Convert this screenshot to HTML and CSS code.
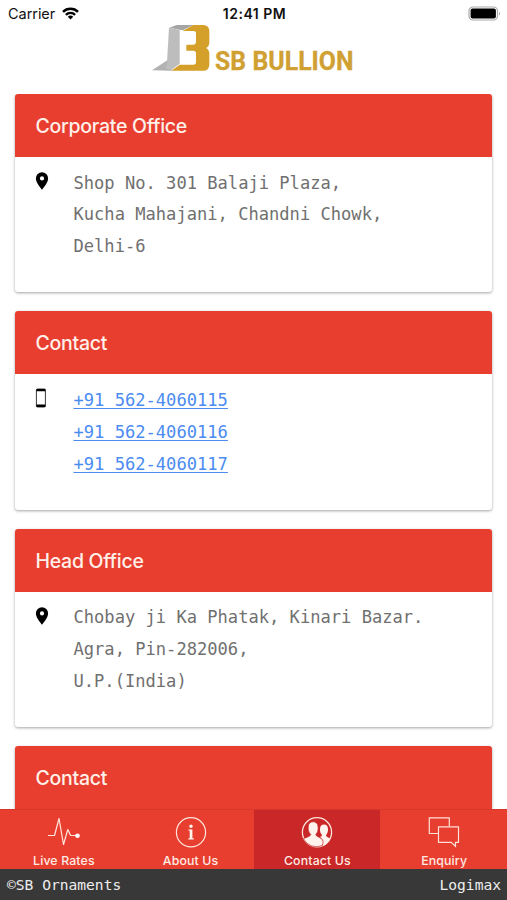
FILE: index.html
```html
<!DOCTYPE html>
<html lang="en">
<head>
<meta charset="utf-8">
<title>SB Bullion</title>
<link rel="stylesheet" href="styles.css">
</head>
<body>
<div class="app">
  <header class="top">
    <div class="status">
      <div class="carrier"><span class="carrier-name">Carrier</span>
        <svg class="wifi" viewBox="0 0 17 13"><g fill="none" stroke="#000" stroke-width="2.4"><path d="M1 4.8a10.6 10.6 0 0 1 15 0"/><path d="M3.9 7.8a6.5 6.5 0 0 1 9.2 0"/></g><path d="M5.8 9.8a3.8 3.8 0 0 1 5.4 0L8.5 12.6z"/></svg>
      </div>
      <span class="time">12:41 PM</span>
      <svg class="battery" viewBox="0 0 33 15"><rect x="1" y="1" width="28.5" height="13" rx="4" fill="#fff" stroke="#aaa" stroke-width="1.2"/><rect x="2.6" y="2.6" width="25.3" height="9.8" rx="2"/><path d="M31 5.5q1.5 2 0 4z" fill="#888"/></svg>
    </div>
    <div class="brand">
      <svg class="mark" viewBox="36 18 174 144">
        <path d="M88 29L110 21H160L128 37L118 35z" fill="#a5a5a5"/>
        <path d="M87 29L119 36V137L95 155L80 150z" fill="#bdbdbd"/>
        <path d="M36 157L82 127L80 150L98 155L94 158z" fill="#b2b2b2"/>
        <path d="M128 39L160 21H190Q208 22 208 40V75Q208 84 199 90Q208 96 208 104V140Q207 158 190 158H94L119 140H160Q168 140 168 132V106Q168 98 160 98H139V80H160Q168 79 168 71V46Q168 39 160 39z" fill="#d5a02a"/>
      </svg>
      <svg class="wordmark" viewBox="0 0 140 26"><text x="1" y="21.5" textLength="31" lengthAdjust="spacingAndGlyphs">SB</text><text x="38.500" y="21.5" textLength="101" lengthAdjust="spacingAndGlyphs">BULLION</text></svg>
    </div>
  </header>

  <main class="cards">
    <section class="card">
      <h2>Corporate Office</h2>
      <div class="body">
        <svg class="pin" viewBox="0 0 14 18"><path fill-rule="evenodd" d="M7 .3A6.1 6.1 0 0 0 .9 6.4C.9 11 7 17.6 7 17.6S13.1 11 13.1 6.4A6.1 6.1 0 0 0 7 .3zm0 4a2.1 2.1 0 1 1 0 4.2 2.1 2.1 0 0 1 0-4.2z"/></svg>
        <address>Shop No. 301 Balaji Plaza,<br>Kucha Mahajani, Chandni Chowk,<br>Delhi-6</address>
      </div>
    </section>
    <section class="card">
      <h2>Contact</h2>
      <div class="body">
        <svg class="phone" viewBox="0 0 12 20"><rect x="1.4" y="1" width="9" height="18" rx="1.2" fill="#fff" stroke="#222" stroke-width=".9"/><path d="M1.4 1h9v2.2h-9zM1.4 16.5h9V19h-9z"/></svg>
        <address><a href="tel:+915624060115">+91 562-4060115</a><br><a href="tel:+915624060116">+91 562-4060116</a><br><a href="tel:+915624060117">+91 562-4060117</a></address>
      </div>
    </section>
    <section class="card">
      <h2>Head Office</h2>
      <div class="body">
        <svg class="pin" viewBox="0 0 14 18"><path fill-rule="evenodd" d="M7 .3A6.1 6.1 0 0 0 .9 6.4C.9 11 7 17.6 7 17.6S13.1 11 13.1 6.4A6.1 6.1 0 0 0 7 .3zm0 4a2.1 2.1 0 1 1 0 4.2 2.1 2.1 0 0 1 0-4.2z"/></svg>
        <address>Chobay ji Ka Phatak, Kinari Bazar.<br>Agra, Pin-282006,<br>U.P.(India)</address>
      </div>
    </section>
    <section class="card">
      <h2>Contact</h2>
    </section>
  </main>

  <nav class="tabs">
    <a class="tab">
      <svg class="icon" viewBox="0 0 34 32"><path d="M1 18.5h6.5L12 1.5l4.5 26 4.3-15 2.8 6H29" fill="none" stroke="#ffe6dc" stroke-width="1.2" stroke-linejoin="round"/><circle cx="30.5" cy="18.7" r="2.3" fill="#fff"/></svg>
      <span>Live Rates</span>
    </a>
    <a class="tab">
      <svg class="icon" viewBox="0 0 34 32"><circle cx="17" cy="15.3" r="14.6" fill="none" stroke="#ffe6dc" stroke-width="1.2"/><circle cx="17" cy="9.2" r="1.7" fill="#fff3ed"/><path d="M14.4 12.5h4V21l1.4.4v1.1h-5.5v-1.1l1.4-.4v-7.2l-1.3-.3z" fill="#fff3ed"/></svg>
      <span>About Us</span>
    </a>
    <a class="tab active">
      <svg class="icon" viewBox="0 0 34 32"><circle cx="17" cy="15.3" r="14.6" fill="none" stroke="#ffe6dc" stroke-width="1.3"/><path d="M20 20q2-.6 2-2c-1.700-1.800-2.200-3.800-2-6 .1-3 1.700-4.400 4-4.400s3.900 1.400 4 4.400c.1 2.400-.5 4.500-1.900 6 0 1.700.8 2 4 3.300-1.500 4-4.500 6.700-7.500 7.700.8-3.500.4-7-2.600-9z" fill="#fff3ed"/><path d="M3.300 21.500Q10.500 19.500 10.800 17.500C8.700 15.500 8 12.800 8.200 10c.2-3.600 2-5.200 4.800-5.200S17.900 6.400 18.100 10c.2 3-.5 5.700-2.300 7.500.3 2.600 6 2.500 7.200 6.500q.4 2-.6 4.500A14.600 14.600 0 0 1 3.300 21.500z" fill="#fff3ed" stroke="#c92728" stroke-width=".7"/></svg>
      <span>Contact Us</span>
    </a>
    <a class="tab">
      <svg class="icon" viewBox="0 0 34 32"><g fill="none" stroke="#ffe0d6" stroke-width="1.2"><path d="M11.500 16.500H2.300V.8h20V9"/><path d="M11.500 9.800h20V25.300h-3v4l-4.300-4H11.500z"/></g></svg>
      <span>Enquiry</span>
    </a>
  </nav>
  <footer class="footer"><span>©SB Ornaments</span><span>Logimax</span></footer>
</div>
</body>
</html>
```
FILE: styles.css
```css
* { box-sizing: border-box; }
body { margin: 0; background: #fff; font-family: Inter, "Liberation Sans", sans-serif; }
.app { width: 507px; height: 900px; display: flex; flex-direction: column; overflow: hidden; }

.top { flex: 0 0 94px; }
.status { height: 26px; padding: 1px 6px 0 8px; display: grid; grid-template-columns: 1fr auto 1fr; align-items: center; font-size: 14.5px; color: #111; }
.carrier { display: flex; align-items: center; gap: 7px; }
.carrier-name { letter-spacing: -.05px; }
.wifi { width: 17px; height: 13px; }
.time { font-weight: 600; font-size: 14px; letter-spacing: .5px; }
.battery { width: 33px; height: 15px; justify-self: end; }
.brand { display: flex; padding-left: 152px; margin-top: -2px; }
.mark { width: 58px; height: 48px; }
.wordmark { width: 140px; height: 26px; margin: 24px 0 0 4px; overflow: visible; }
.wordmark text { font: 700 25px "Roboto", sans-serif; fill: #d0a032; stroke: #d0a032; stroke-width: .3; }

.cards { flex: 1; min-height: 0; overflow: hidden; padding: 0 15px; display: flex; flex-direction: column; gap: 19px; }
.card { flex: 0 0 198.400px; border-radius: 3px; background: #fff; box-shadow: 0 1px 3px rgba(0, 0, 0, .36); }
.card h2 { margin: 0; height: 63px; padding: 1px 20.500px 0; display: flex; align-items: center; border-radius: 3px 3px 0 0; background: #e83e30; color: #fff0e9; font-size: 19.500px; font-weight: 500; letter-spacing: -.28px; }
.body { display: flex; padding: 10.600px 20px 0; }
.pin { width: 14px; height: 18px; margin: 4.900px 24.500px 0 0; }
.phone { width: 12px; height: 20px; margin: 3.400px 26.500px 0 0; }
address { font: normal 17.100px/31.800px "DejaVu Sans Mono", monospace; color: #707070; white-space: nowrap; }
address a { color: #4c8cf0; text-decoration: underline; text-decoration-thickness: 1px; text-underline-offset: 2px; }

.tabs { flex: 0 0 60px; display: grid; grid-template-columns: repeat(4, 1fr); background: #e83e30; border-top: 1px solid #d5382b; }
.tab { display: flex; flex-direction: column; align-items: center; padding: 7px 0 0 1px; color: #ffebe2; font-size: 12.300px; font-weight: 500; line-height: 16px; letter-spacing: .15px; }
.tab span { margin-top: 4px; }
.active { background: #c92728; }
.icon { width: 34px; height: 32px; }
.footer { flex: 0 0 31px; display: flex; justify-content: space-between; align-items: center; padding: 0 6px 0 7px; background: #383838; color: #eee; font: 14.600px "DejaVu Sans Mono", monospace; }
```
